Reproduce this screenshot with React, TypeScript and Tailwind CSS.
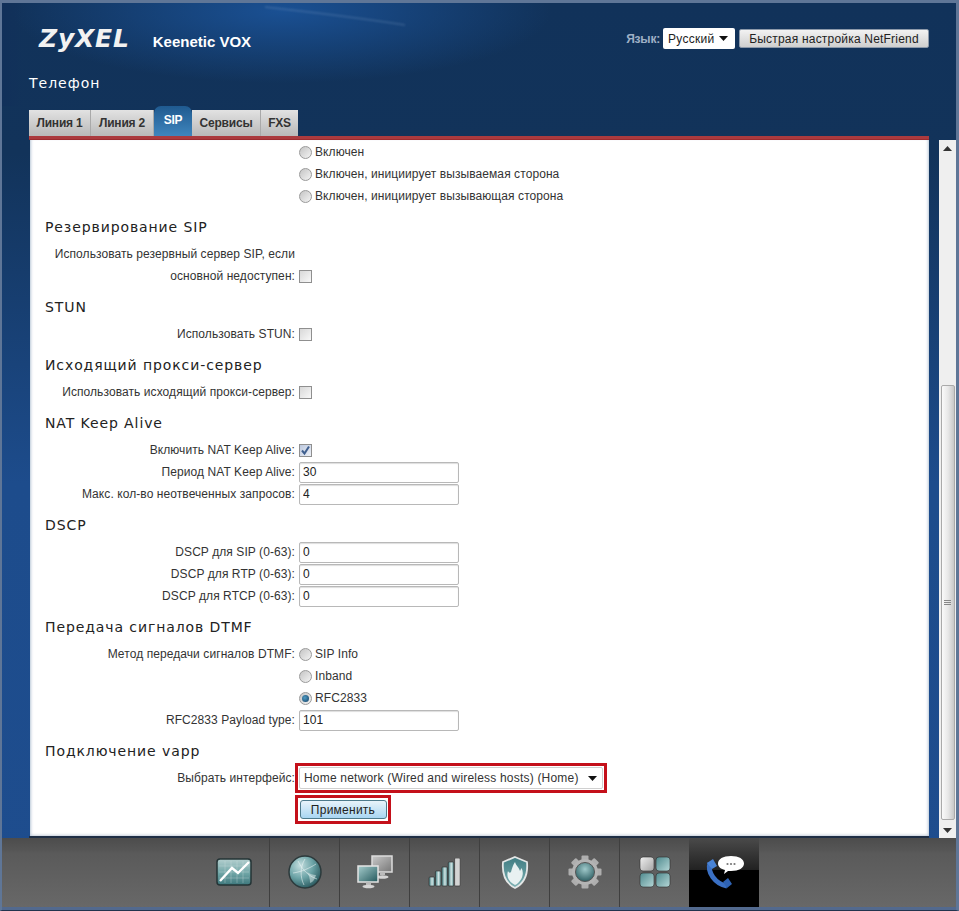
import React from "react";

const sans = "font-['Liberation_Sans',Arial,sans-serif]";
const deja = "font-['DejaVu_Sans',sans-serif]";

function Radio({ checked }: { checked?: boolean }) {
  return (
    <span className="flex h-[13px] w-[13px] items-center justify-center rounded-full border border-[#9a9a9a] bg-[linear-gradient(135deg,#c4c4c4,#f4f4f4)]">
      {checked && <span className="h-[7px] w-[7px] rounded-full bg-[radial-gradient(circle_at_40%_40%,#4f9bc4,#123f63)]" />}
    </span>
  );
}

function Check({ checked }: { checked?: boolean }) {
  return (
    <span className={`flex h-[13px] w-[13px] items-center justify-center border border-[#8f8f8f] ${checked ? "bg-[linear-gradient(135deg,#bcc8de,#eef1f7)]" : "bg-[linear-gradient(135deg,#d8d8d8,#f8f8f8)]"}`}>
      {checked && (
        <svg width="11" height="11" viewBox="0 0 11 11">
          <path d="M2 5.5 L4.5 8.5 L9 1.5" fill="none" stroke="#3f5f8f" strokeWidth="2" />
        </svg>
      )}
    </span>
  );
}

function Heading({ children }: { children: React.ReactNode }) {
  return <h3 className={`${deja} mt-[9px] mb-[5px] flex h-[22px] items-center text-[14px] font-normal tracking-[0.9px] text-[#222]`}>{children}</h3>;
}

function Row({ label, children }: { label?: string; children?: React.ReactNode }) {
  return (
    <div className="grid h-[22px] grid-cols-[250px_1fr] items-center gap-x-1">
      <span className="text-right whitespace-nowrap">{label}</span>
      <div className="flex items-center gap-[3px]">{children}</div>
    </div>
  );
}

function Field({ value }: { value: string }) {
  return (
    <input
      readOnly
      value={value}
      className="h-[21px] w-[160px] rounded-[2px] border border-[#b8b8b8] bg-white px-[3px] text-[12px] text-[#222] shadow-[inset_0_1px_1px_#ddd] outline-none"
    />
  );
}

function RadioRow({ label, text, checked }: { label?: string; text: string; checked?: boolean }) {
  return (
    <Row label={label}>
      <Radio checked={checked} />
      <span>{text}</span>
    </Row>
  );
}

function Caret({ className }: { className?: string }) {
  return (
    <svg width="9" height="5" viewBox="0 0 9 5" className={className}>
      <path d="M0 0H9L4.5 5Z" fill="#111" />
    </svg>
  );
}

function ChartIcon() {
  return (
    <svg width="36" height="28" viewBox="0 0 36 28">
      <defs>
        <linearGradient id="cg" x1="0" y1="0" x2="0" y2="1">
          <stop offset="0" stopColor="#b4cfcf" />
          <stop offset="0.55" stopColor="#6fa5a6" />
          <stop offset="1" stopColor="#3d777c" />
        </linearGradient>
      </defs>
      <rect x="1" y="1" width="34" height="26" rx="3" fill="url(#cg)" stroke="#243436" strokeWidth="1.5" />
      <path d="M3 8H33M3 14H33M3 20H33M9 3V25M15 3V25M21 3V25M27 3V25" stroke="#d7e6e6" strokeOpacity="0.3" strokeWidth="1" />
      <path d="M4 23L16 10L22 15L33 4" fill="none" stroke="#fff" strokeWidth="2.4" />
    </svg>
  );
}

function GlobeIcon() {
  return (
    <svg width="34" height="34" viewBox="0 0 34 34">
      <defs>
        <radialGradient id="gg" cx="0.35" cy="0.3" r="0.8">
          <stop offset="0" stopColor="#c4dedf" />
          <stop offset="0.5" stopColor="#6ba3a6" />
          <stop offset="1" stopColor="#1f4d53" />
        </radialGradient>
      </defs>
      <circle cx="17" cy="17" r="16" fill="url(#gg)" stroke="#2c3a3c" strokeWidth="1.5" />
      <path d="M10 6C14 14 20 21 29 24M17 4C12 12 12 22 16 30M5 18C13 17 22 13 28 9" fill="none" stroke="#eef6f6" strokeOpacity="0.55" strokeWidth="1" />
      <path d="M19 17C22 19 25 20 28 20C27 24 25 27 22 28C22 24 21 20 19 17Z" fill="#e6f1f1" fillOpacity="0.5" />
    </svg>
  );
}

function MonitorsIcon() {
  return (
    <svg width="36" height="34" viewBox="0 0 36 34">
      <defs>
        <linearGradient id="mg" x1="0" y1="0" x2="1" y2="1">
          <stop offset="0" stopColor="#a7cdcd" />
          <stop offset="1" stopColor="#23585c" />
        </linearGradient>
        <linearGradient id="mg2" x1="0" y1="0" x2="1" y2="1">
          <stop offset="0" stopColor="#c9c9c9" />
          <stop offset="1" stopColor="#767676" />
        </linearGradient>
      </defs>
      <rect x="15" y="1" width="20" height="16" fill="url(#mg2)" stroke="#dcdcdc" strokeWidth="1.5" />
      <path d="M23 17H28V20H23Z" fill="#bbb" />
      <ellipse cx="25.5" cy="22" rx="6" ry="1.8" fill="#d5d5d5" />
      <rect x="1" y="11" width="20" height="16" fill="url(#mg)" stroke="#e4e4e4" strokeWidth="1.5" />
      <path d="M9 27H14V30H9Z" fill="#bbb" />
      <ellipse cx="11.5" cy="31.5" rx="6" ry="1.8" fill="#d5d5d5" />
    </svg>
  );
}

function SignalIcon() {
  const bars = [
    [1, 19, 9],
    [7.4, 13, 15],
    [13.8, 9, 19],
    [20.2, 4, 24],
    [26.6, 0, 28],
  ];
  return (
    <svg width="33" height="29" viewBox="0 0 33 29">
      <defs>
        <linearGradient id="sg" x1="0" y1="0" x2="1" y2="0">
          <stop offset="0" stopColor="#3f7c80" />
          <stop offset="0.55" stopColor="#cfe3e3" />
          <stop offset="1" stopColor="#5d9396" />
        </linearGradient>
      </defs>
      {bars.map(([x, y, h], i) => (
        <rect key={i} x={x} y={y} width="5.6" height={h} rx="1" fill={i === 4 ? "#d4d4d4" : "url(#sg)"} stroke="#333" strokeWidth="0.7" />
      ))}
    </svg>
  );
}

function ShieldIcon() {
  return (
    <svg width="28" height="33" viewBox="0 0 28 33">
      <defs>
        <linearGradient id="shg" x1="0" y1="0" x2="0" y2="1">
          <stop offset="0" stopColor="#3f7c82" />
          <stop offset="1" stopColor="#7fb2b4" />
        </linearGradient>
      </defs>
      <path d="M14 1L26 6C27 17 24 27 14 32C4 27 1 17 2 6Z" fill="url(#shg)" stroke="#e3e6e6" strokeWidth="1.8" />
      <path d="M14 29C8 26 5 21 7 15C8 17 9 17 10 16C11 12 12 9 14 6C15 10 18 11 19 15L20.5 12C24 18 20 26 14 29Z" fill="#e8f1f1" />
    </svg>
  );
}

function GearIcon() {
  const teeth = [0, 45, 90, 135, 180, 225, 270, 315];
  return (
    <svg width="34" height="34" viewBox="0 0 34 34">
      <defs>
        <radialGradient id="gr" cx="0.5" cy="0.35" r="0.7">
          <stop offset="0" stopColor="#9fc9ca" />
          <stop offset="1" stopColor="#26575c" />
        </radialGradient>
      </defs>
      {teeth.map((t) => (
        <rect key={t} x="13.5" y="0.5" width="7" height="8" rx="1" fill="#aeaeae" transform={`rotate(${t} 17 17)`} />
      ))}
      <circle cx="17" cy="17" r="13" fill="#b4b4b4" />
      <circle cx="17" cy="17" r="9.5" fill="url(#gr)" stroke="#555" strokeWidth="1" />
    </svg>
  );
}

function AppsIcon() {
  const cells = [
    [1, 1, "url(#ag2)"],
    [17, 1, "url(#ag)"],
    [1, 17, "url(#ag)"],
    [17, 17, "url(#ag)"],
  ] as const;
  return (
    <svg width="32" height="32" viewBox="0 0 32 32">
      <defs>
        <linearGradient id="ag" x1="0" y1="0" x2="1" y2="1">
          <stop offset="0" stopColor="#4f8a8e" />
          <stop offset="1" stopColor="#b5d7d7" />
        </linearGradient>
        <linearGradient id="ag2" x1="0" y1="0" x2="1" y2="1">
          <stop offset="0" stopColor="#f0f0f0" />
          <stop offset="1" stopColor="#a4a4a4" />
        </linearGradient>
      </defs>
      {cells.map(([x, y, f], i) => (
        <rect key={i} x={x} y={y} width="14" height="14" rx="3" fill={f} stroke="#2c2c2c" strokeWidth="0.6" />
      ))}
    </svg>
  );
}

function PhoneIcon() {
  return (
    <svg width="44" height="34" viewBox="0 0 44 34">
      <path d="M8 8C5 17 13 29 25 31" fill="none" stroke="#3a70c4" strokeWidth="5" />
      <path d="M5 8L11 4L15 11L10 14Z" fill="#4a84d6" />
      <path d="M21 27L26 23L30 29L25 33Z" fill="#2f63b4" />
      <path d="M29 1C37 1 42 4 42 8.5C42 13 37 16 29 16L26 16L22 19L23 15C19 14 16 12 16 8.5C16 4 21 1 29 1Z" fill="#fff" />
      <circle cx="25.5" cy="9" r="1.1" fill="#777" />
      <circle cx="29" cy="9" r="1.1" fill="#777" />
      <circle cx="32.5" cy="9" r="1.1" fill="#777" />
    </svg>
  );
}

const dockIcons = [ChartIcon, GlobeIcon, MonitorsIcon, SignalIcon, ShieldIcon, GearIcon, AppsIcon];

const tabs = [
  { t: "Линия 1", w: "w-[62px]" },
  { t: "Линия 2", w: "w-[63px]" },
  { t: "SIP", w: "w-[38px]", active: true },
  { t: "Сервисы", w: "w-[69px]" },
  { t: "FXS", w: "w-[37px]" },
];

export default function App() {
  return (
    <div className={`${sans} flex h-[911px] w-[959px] flex-col overflow-hidden border-x-[2px] border-t-[3px] border-b-[1px] border-r-[3px] border-x-[#5f7697] border-t-[#5f7697] border-b-[#22344e] bg-[radial-gradient(ellipse_270px_72px_at_280px_8px,#1a5093,#1a509300),linear-gradient(180deg,#11325a_0,#12335a_150px,#1d4c8c_480px,#1e4d8e_100%)]`}>
      <header className="relative flex h-[103px] shrink-0 flex-col bg-[linear-gradient(90deg,#11305a_0,#11305a00_20px)] pl-[27px]">
        {/* streak of light in the header artwork */}
        <svg width="160" height="30" viewBox="0 0 160 30" className="absolute top-0 left-[258px] blur-[1px]">
          <path d="M5 4C50 9 100 15 145 22" fill="none" stroke="#9db8d8" strokeOpacity="0.25" strokeWidth="1.5" />
        </svg>
        <div className="relative flex h-[58px] items-center">
          <span className={`${deja} ml-[10px] mt-[13px] text-[25px] leading-none font-bold italic tracking-[0.8px] text-[#f2f2f2]`}>ZyXEL</span>
          <span className="ml-[23px] mt-[21px] text-[15px] font-bold text-white">Keenetic VOX</span>
          <div className="mr-[27px] ml-auto mt-[13px] flex items-center">
            <span className="text-[12px] tracking-[-0.2px] font-bold text-[#9fb0c6]">Язык:</span>
            <div className="ml-[3px] flex h-[21px] w-[72px] items-center justify-between rounded-[2px] bg-white pr-[7px] pl-[5px] text-[12px] tracking-[0.3px] text-[#222]">
              Русский
              <Caret />
            </div>
            <button className="ml-[4px] h-[19px] w-[190px] rounded-[2px] border border-[#8c99aa] bg-[linear-gradient(180deg,#f2f2f2,#cfcfcf)] text-center text-[12px] leading-none tracking-[0.2px] text-[#222]">
              Быстрая настройка NetFriend
            </button>
          </div>
        </div>
        <div className={`${deja} mt-[12px] text-[14px] leading-[20px] tracking-[1px] text-white`}>Телефон</div>
      </header>

      <nav className="flex h-[30px] shrink-0 items-end pl-[27px]">
        {tabs.map((tab) =>
          tab.active ? (
            <div key={tab.t} className={`${tab.w} flex h-[30px] items-center justify-center rounded-t-[7px] bg-[linear-gradient(180deg,#1f5a90,#3f85bd)] pb-[3px] text-[12px] font-bold tracking-[-0.2px] text-white`}>
              {tab.t}
            </div>
          ) : (
            <div key={tab.t} className={`${tab.w} flex h-[26px] items-center justify-center border-r border-[#a9a9a9] bg-[linear-gradient(180deg,#e2e2e2,#b9b9b9)] text-[12px] font-bold tracking-[-0.2px] text-[#333] last:border-r-0`}>
              {tab.t}
            </div>
          ),
        )}
      </nav>

      <div className="flex h-[702px] shrink-0 pl-[27px]">
        <main className="flex w-[900px] flex-col">
          <div className="h-[4px] shrink-0 bg-[linear-gradient(180deg,#ab3a3e,#ab3a3e_75%,#8b1c20)]" />
          <div className="ml-[1px] h-[696px] overflow-hidden bg-white px-[15px] pt-[1px] text-[12px] tracking-[0.08px] text-[#333] shadow-[inset_3px_0_3px_-2px_#b9c6d6,inset_-3px_0_3px_-2px_#b9c6d6,inset_0_-3px_3px_-2px_#c6cfdb]">
            <RadioRow text="Включен" />
            <RadioRow text="Включен, инициирует вызываемая сторона" />
            <RadioRow text="Включен, инициирует вызывающая сторона" />

            <Heading>Резервирование SIP</Heading>
            <Row label="Использовать резервный сервер SIP, если" />
            <Row label="основной недоступен:">
              <Check />
            </Row>

            <Heading>STUN</Heading>
            <Row label="Использовать STUN:">
              <Check />
            </Row>

            <Heading>Исходящий прокси-сервер</Heading>
            <Row label="Использовать исходящий прокси-сервер:">
              <Check />
            </Row>

            <Heading>NAT Keep Alive</Heading>
            <Row label="Включить NAT Keep Alive:">
              <Check checked />
            </Row>
            <Row label="Период NAT Keep Alive:">
              <Field value="30" />
            </Row>
            <Row label="Макс. кол-во неотвеченных запросов:">
              <Field value="4" />
            </Row>

            <Heading>DSCP</Heading>
            <Row label="DSCP для SIP (0-63):">
              <Field value="0" />
            </Row>
            <Row label="DSCP для RTP (0-63):">
              <Field value="0" />
            </Row>
            <Row label="DSCP для RTCP (0-63):">
              <Field value="0" />
            </Row>

            <Heading>Передача сигналов DTMF</Heading>
            <RadioRow label="Метод передачи сигналов DTMF:" text="SIP Info" />
            <RadioRow text="Inband" />
            <RadioRow text="RFC2833" checked />
            <Row label="RFC2833 Payload type:">
              <Field value="101" />
            </Row>

            <Heading>Подключение vapp</Heading>
            <div className="mt-[1px]">
              <Row label="Выбрать интерфейс:">
                <div className="-m-[4px] border-[3px] border-[#c4101a] p-[1px]">
                  <div className="flex h-[22px] w-[304px] items-center justify-between rounded-[2px] border border-[#d0d0d0] bg-white pr-[5px] pl-[4px] tracking-[0.2px]">
                    Home network (Wired and wireless hosts) (Home)
                    <Caret />
                  </div>
                </div>
              </Row>
            </div>
            <div className="mt-[6px] ml-[250px] flex w-[96px] justify-center border-[3px] border-[#c4101a] py-[2px]">
              <button className="h-[19px] w-[87px] rounded-[3px] border border-[#4d7a8c] bg-[linear-gradient(180deg,#e8f3fa,#a9d6f2)] text-[12px] leading-none tracking-[0.25px] text-[#222]">
                Применить
              </button>
            </div>
          </div>
          <div className="h-[2px] shrink-0 bg-[#1f2f45]" />
        </main>

        <aside className="relative ml-[10px] mt-[4px] flex w-[17px] flex-col items-center bg-[#efefef]">
          <svg width="9" height="5" viewBox="0 0 9 5" className="mt-[6px]">
            <path d="M0 5H9L4.5 0Z" fill="#333" />
          </svg>
          <div className="mt-[234px] flex h-[435px] w-[14px] items-center justify-center rounded-[2px] border border-[#aaa] bg-[linear-gradient(90deg,#fafafa,#e8e8e8_50%,#c8c8c8)]">
            <div className="h-[5px] w-[7px] border-y border-[#888] bg-[linear-gradient(180deg,transparent_40%,#888_40%,#888_60%,transparent_60%)]" />
          </div>
          <svg width="9" height="5" viewBox="0 0 9 5" className="mt-[8px]">
            <path d="M0 0H9L4.5 5Z" fill="#333" />
          </svg>
        </aside>
      </div>

      <footer className="flex h-[69px] shrink-0 justify-center bg-[linear-gradient(180deg,#4c4c4c_0,#565656_18%,#5a5a5a_22%,#686868_100%)]">
        {dockIcons.map((Icon, i) => (
          <div key={i} className="flex w-[70px] items-center justify-center border-l border-[#3f3f3f] pb-[1px] first:border-l-0">
            <Icon />
          </div>
        ))}
        <div className="flex w-[70px] items-center justify-center bg-[linear-gradient(180deg,#4a4a4a_0,#222_46%,#000_46%)] pb-[1px]">
          <PhoneIcon />
        </div>
      </footer>
      <div className="h-[3px] shrink-0 bg-[#52698e]" />
    </div>
  );
}
